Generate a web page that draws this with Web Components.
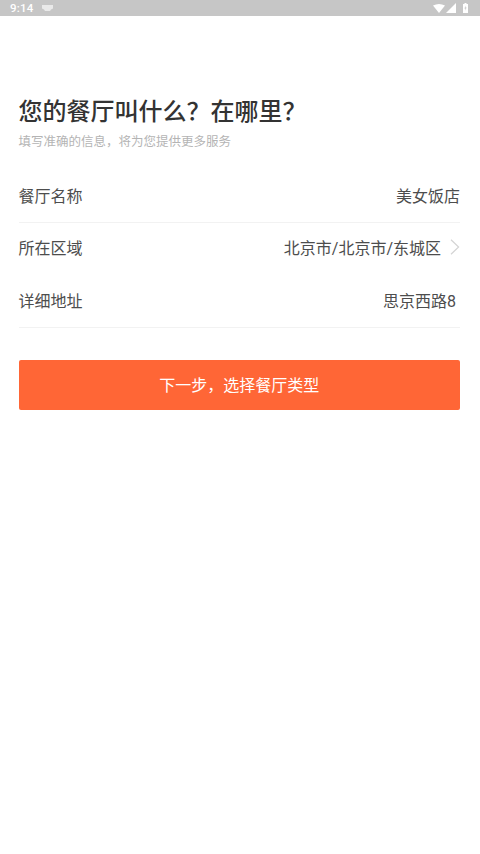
<!DOCTYPE html>
<html lang="zh">
<head>
<meta charset="utf-8">
<style>
  html, body { margin: 0; padding: 0; background: #fff; }
  body { font-family: Roboto, "Noto Sans CJK SC", sans-serif; }
</style>
</head>
<body>
<status-bar></status-bar>
<restaurant-form>
  <form-row label="餐厅名称" style="height:54px;padding-bottom:1px">美女饭店</form-row>
  <form-row label="所在区域" arrow style="padding-bottom:5px">北京市/北京市/东城区</form-row>
  <form-row label="详细地址" inset style="height:53px">思京西路8</form-row>
</restaurant-form>

<script>
/**
 * Android status bar, dimmed grey.
 */
class StatusBar extends HTMLElement {
  constructor() {
    super();
    this.attachShadow({mode: 'open'});
    this.shadowRoot.innerHTML = `
      <style>
        :host { display: flex; align-items: center; height: 16px; padding: 0 12px 0 10px;
          background: #c6c6c6; color: #fff; font: 500 11.5px Roboto, sans-serif; }
        span { margin-right: 9px; letter-spacing: .2px; }
        .spacer { flex: 1; }
        svg { display: block; }
      </style>
      <span>9:14</span>
      <svg width="11" height="6" viewBox="0 0 11 6"><path d="M0 0h11v3.5L9 4.5 8 6H3L2 4.5 0 3.5z" fill="#e9e9e9"/></svg>
      <div class="spacer"></div>
      <svg width="12" height="9" viewBox="0 0 12 9" style="margin-right:1px"><path d="M0 1.6Q6-1.6 12 1.6L6 9z" fill="#fff"/></svg>
      <svg width="10" height="10" viewBox="0 0 10 10" style="margin-right:7px"><path d="M10 0V10H0z" fill="#fff"/></svg>
      <svg width="5" height="10" viewBox="0 0 5 10"><path d="M1.5 0h2v1H5v9H0V1h1.5z" fill="#fff"/><path d="M2.8 2.5 1.4 5.6h1L2.2 7.8 3.6 4.6h-1z" fill="#c6c6c6"/></svg>
    `;
  }
}

/**
 * One label and value row of the form.
 */
class FormRow extends HTMLElement {
  constructor() {
    super();
    this.attachShadow({mode: 'open'});
    const arrow = this.hasAttribute('arrow') ? `
      <svg width="10" height="16" viewBox="0 0 10 16"><path d="M1 .8 8.6 8 1 15.2" fill="none" stroke="#d4d4d4" stroke-width="1.2"/></svg>` : '';
    this.shadowRoot.innerHTML = `
      <style>
        :host { display: flex; align-items: center; justify-content: space-between;
          height: 52px; box-sizing: border-box; padding-bottom: 3px;
          border-bottom: 1px solid #f2f2f2; font-size: 16px; color: #4d4d4d; }
        :host([arrow]) { border-bottom: 0; }
        :host([inset]) .value { padding-right: 4px; }
        .value { display: flex; align-items: center; gap: 9px; }
      </style>
      <span>${this.getAttribute('label')}</span>
      <span class="value"><slot></slot>${arrow}</span>
    `;
  }
}

/**
 * The whole "restaurant name and place" step.
 */
class RestaurantForm extends HTMLElement {
  constructor() {
    super();
    this.attachShadow({mode: 'open'});
    this.shadowRoot.innerHTML = `
      <style>
        :host { display: block; padding: 79px 20px 0 18.5px; }
        h1 { margin: 0; font-size: 24px; line-height: 34px; font-weight: 500; color: #333; }
        p { margin: 4px 0 18px; font-size: 12.5px; line-height: 18px; color: #b4b4b4; }
        button { display: block; width: 100%; height: 50px; margin-top: 32px; padding: 0 0 2px;
          border: 0; border-radius: 2px; background: #ff6636; color: #fff;
          font: 16px Roboto, "Noto Sans CJK SC", sans-serif; }
      </style>
      <h1>您的餐厅叫什么？在哪里？</h1>
      <p>填写准确的信息，将为您提供更多服务</p>
      <slot></slot>
      <button type="button">下一步，选择餐厅类型</button>
    `;
  }
}

window.customElements.define('status-bar', StatusBar);
window.customElements.define('form-row', FormRow);
window.customElements.define('restaurant-form', RestaurantForm);
</script>
</body>
</html>
